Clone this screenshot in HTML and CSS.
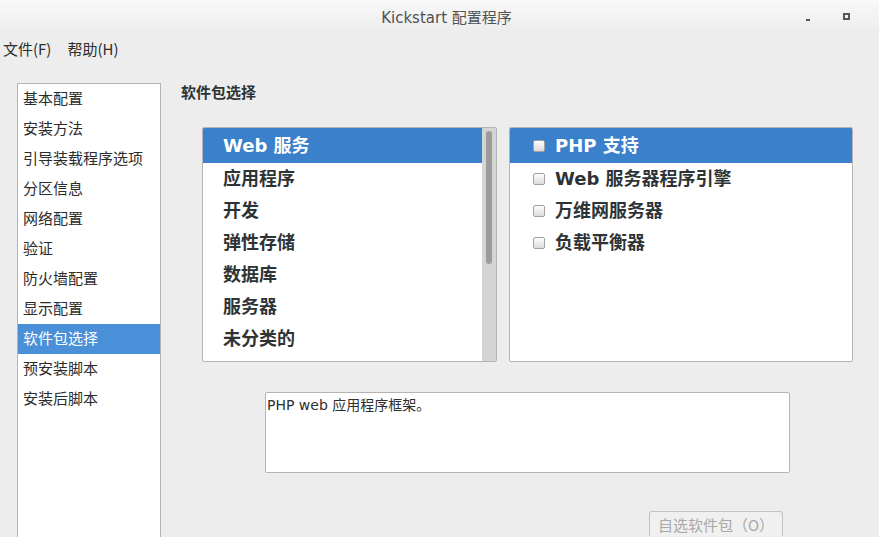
FILE: index.html
```html
<!DOCTYPE html>
<html lang="zh-CN">
<head>
    <meta charset="UTF-8">
    <title>Kickstart 配置程序</title>
    <link rel="stylesheet" href="styles.css">
</head>
<body>
    <div class="titlebar">
        <span></span>
        <span class="title">Kickstart 配置程序</span>
        <div class="controls">
            <span class="btn-min"></span>
            <span class="btn-max"></span>
        </div>
    </div>

    <div class="menubar">
        <span>文件(F)</span>
        <span>帮助(H)</span>
    </div>

    <div class="main">
        <ul class="sidebar">
            <li>基本配置</li>
            <li>安装方法</li>
            <li>引导装载程序选项</li>
            <li>分区信息</li>
            <li>网络配置</li>
            <li>验证</li>
            <li>防火墙配置</li>
            <li>显示配置</li>
            <li class="active">软件包选择</li>
            <li>预安装脚本</li>
            <li>安装后脚本</li>
        </ul>

        <div class="content">
            <h2>软件包选择</h2>
            <div class="lists">
                <div class="listbox groups">
                    <ul>
                        <li class="selected">Web 服务</li>
                        <li>应用程序</li>
                        <li>开发</li>
                        <li>弹性存储</li>
                        <li>数据库</li>
                        <li>服务器</li>
                        <li>未分类的</li>
                    </ul>
                    <div class="scrollbar"><div class="thumb"></div></div>
                </div>
                <div class="listbox packages">
                    <ul>
                        <li class="selected"><span class="check"></span>PHP 支持</li>
                        <li><span class="check"></span>Web 服务器程序引擎</li>
                        <li><span class="check"></span>万维网服务器</li>
                        <li><span class="check"></span>负载平衡器</li>
                    </ul>
                </div>
            </div>
            <div class="description">PHP web 应用程序框架。</div>
            <div class="actions">
                <button disabled>自选软件包（O）</button>
            </div>
        </div>
    </div>
</body>
</html>
```

FILE: styles.css
```css
body {
    margin: 0;
    background: #ededed;
    font-family: "Noto Sans CJK SC", "DejaVu Sans", sans-serif;
    color: #2e3436;
    overflow: hidden;
    height: 537px;
}
ul {
    list-style: none;
    margin: 0;
    padding: 0;
}
.titlebar {
    height: 33px;
    display: grid;
    grid-template-columns: 1fr auto 1fr;
    align-items: center;
    background: linear-gradient(#f9f9f9, #ececec);
}
.title {
    font-family: "DejaVu Sans", "Noto Sans CJK SC", sans-serif;
    font-size: 15px;
    color: #4d5254;
    padding-left: 14px;
}
.controls {
    display: flex;
    justify-content: flex-end;
    align-items: center;
    gap: 33px;
    padding-right: 29px;
}
.btn-min {
    width: 4px;
    height: 2px;
    margin-top: 7px;
    background: #4f5a5f;
}
.btn-max {
    width: 3px;
    height: 3px;
    border: 2px solid #4f5a5f;
    margin-top: -1px;
}
.menubar {
    display: flex;
    gap: 16px;
    height: 31px;
    padding-bottom: 2px;
    align-items: center;
    padding-left: 3px;
    font-size: 15px;
    color: #2e2e2e;
}
.main {
    display: flex;
    padding: 17px 0 0 17px;
}
.sidebar {
    width: 142px;
    height: 470px;
    background: #fff;
    border: 1px solid #b4b4b4;
    flex-shrink: 0;
}
.sidebar li {
    height: 30px;
    line-height: 28px;
    padding-left: 5px;
    font-size: 15px;
    color: #2b2b2b;
}
.sidebar li.active {
    background: #4a90d9;
    color: #fff;
}
.content {
    margin-left: 20px;
}
h2 {
    margin: 0;
    height: 44px;
    line-height: 17px;
    font-size: 15px;
    font-weight: bold;
    color: #2e3436;
}
.lists {
    display: flex;
    gap: 12px;
    margin-left: 21px;
}
.listbox {
    background: #fff;
    border: 1px solid #b4b4b4;
    border-radius: 2px;
    height: 233px;
    display: flex;
    overflow: hidden;
}
.groups {
    width: 293px;
}
.packages {
    width: 342px;
}
.listbox ul {
    flex: 1;
}
.listbox li {
    height: 32px;
    line-height: 32px;
    font-size: 18px;
    font-weight: bold;
    font-family: "DejaVu Sans", "Noto Sans CJK SC", sans-serif;
    color: #2e3436;
}
.listbox li.selected {
    height: 35px;
    line-height: 35px;
    background: #3a80cb;
    color: #fff;
}
.groups li {
    padding-left: 20px;
}
.packages li {
    padding-left: 23px;
    display: flex;
    align-items: center;
}
.check {
    width: 10px;
    height: 10px;
    border: 1px solid #a2a2a2;
    border-radius: 2px;
    background: linear-gradient(#fdfdfd, #dcdcdc);
    margin-right: 10px;
    flex-shrink: 0;
}
.scrollbar {
    width: 14px;
    background: #d4d4d4;
    padding: 3px 0 0 4px;
    box-sizing: border-box;
}
.thumb {
    width: 6px;
    height: 133px;
    background: #9b9b9b;
    border-radius: 3px;
}
.description {
    width: 521px;
    height: 73px;
    margin: 30px 0 0 84px;
    padding: 3px 1px;
    background: #fff;
    border: 1px solid #b4b4b4;
    border-radius: 2px;
    font-family: "DejaVu Sans", "Noto Sans CJK SC", sans-serif;
    font-size: 14px;
    line-height: 18px;
    color: #2e2e2e;
}
.actions {
    display: flex;
    justify-content: flex-end;
    width: 602px;
    margin-top: 38px;
}
button {
    width: 134px;
    height: 25px;
    font-family: "Noto Sans CJK SC", sans-serif;
    font-size: 15px;
    line-height: 23px;
    color: #a8a8a8;
    background: #f0f0f0;
    border: 1px solid #c4c4c4;
    border-bottom: none;
    border-radius: 3px 3px 0 0;
    padding: 0;
}
```
